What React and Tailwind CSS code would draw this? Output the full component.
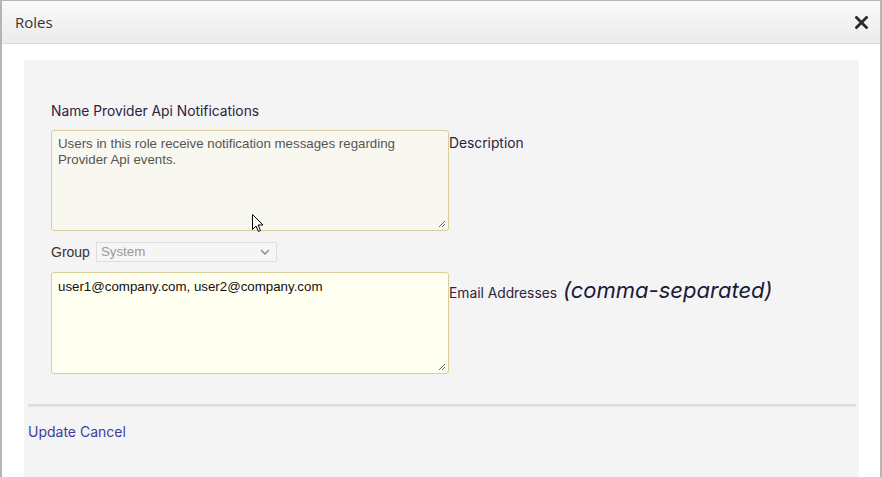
import React from "react";

export default function App() {
  const poppins = { fontFamily: "Inter, 'Noto Sans', sans-serif" };
  const arial = { fontFamily: "'Liberation Sans', Arial, sans-serif" };
  return (
    <div className="w-[882px] h-[477px] overflow-hidden bg-white relative" style={{ fontFamily: "'Open Sans', sans-serif" }}>
      <div className="h-full border-t border-l-2 border-r-2 border-[#b5b5b5] flex flex-col">
        <div className="h-[43px] shrink-0 flex items-center justify-between pl-[13px] pr-[12px] border-b border-[#dcdcdc] bg-gradient-to-b from-[#fafafa] to-[#ebebeb]">
          <span className="text-[15px] text-[#333]">Roles</span>
          <span className="text-[#222]">
            <svg width="13" height="13" viewBox="0 0 13 13">
              <path d="M1.5 1.5 L11.5 11.5 M11.5 1.5 L1.5 11.5" stroke="#2a2a2a" strokeWidth="2.8" strokeLinecap="square" />
            </svg>
          </span>
        </div>
        <div className="flex-1 pt-[16px] pl-[22px] pr-[21px]">
          <div className="h-full bg-[#f4f4f4] pl-[27px] pt-[42px]" style={poppins}>
            <div className="text-[13.8px] text-[#2b2340] leading-[18px]">Name Provider Api Notifications</div>
            <div className="flex items-start mt-[10px]">
              <div className="w-[398px] h-[101px] border border-[#d9cf9c] rounded-[3px] bg-[#f8f8f1] px-[6px] pt-[5px] text-[13.3px] leading-[16px] text-[#555] relative" style={arial}>
                Users in this role receive notification messages regarding Provider Api events.
                <Grip />
              </div>
              <span className="text-[13.8px] text-[#2b2340] mt-[3px]">Description</span>
            </div>
            <div className="flex items-center mt-[11px] h-[20px]">
              <span className="text-[14px] text-[#333] mr-[6px]" style={arial}>Group</span>
              <div className="w-[181px] h-[20px] border border-[#dedede] bg-[#f5f5f5] flex items-center justify-between pl-[4px] pr-[6px] text-[13.3px] text-[#9a9a9a]" style={arial}>
                <span>System</span>
                <svg width="10" height="6" viewBox="0 0 10 6"><path d="M1 1 L5 5 L9 1" stroke="#888" strokeWidth="1.4" fill="none" /></svg>
              </div>
            </div>
            <div className="flex items-start mt-[10px]">
              <div className="w-[398px] h-[102px] border border-[#d9cf9c] rounded-[3px] bg-[#fffff0] px-[6px] pt-[6px] text-[13.3px] leading-[16px] text-[#111] relative" style={arial}>
                user1@company.com, user2@company.com
                <Grip />
              </div>
              <div className="flex items-baseline mt-[2px]">
                <span className="text-[13.8px] text-[#2b2340]">Email Addresses</span>
                <span className="text-[22px] italic text-[#1a1a3a] ml-[6px]">(comma-separated)</span>
              </div>
            </div>
            <div className="h-[3px] bg-[#dcdcdc] border-b border-[#e6e6e6] mt-[30px] ml-[-23px] mr-[3px]"></div>
            <div className="ml-[-23px] mt-[14px] text-[14px] text-[#3d3d9a]">Update Cancel</div>
          </div>
        </div>
      </div>
      <svg className="absolute left-[252px] top-[214px]" width="12" height="19" viewBox="0 0 12 19">
        <path d="M0.5 0.5 L0.5 15.5 L4 12 L6.5 17.5 L8.5 16.5 L6 11 L11 11 Z" fill="#fff" stroke="#000" strokeWidth="1" />
      </svg>
    </div>
  );
}

function Grip() {
  return (
    <svg className="absolute right-[2px] bottom-[2px]" width="8" height="8" viewBox="0 0 8 8">
      <path d="M7 1 L1 7 M7 4 L4 7" stroke="#666" strokeWidth="1" />
    </svg>
  );
}
